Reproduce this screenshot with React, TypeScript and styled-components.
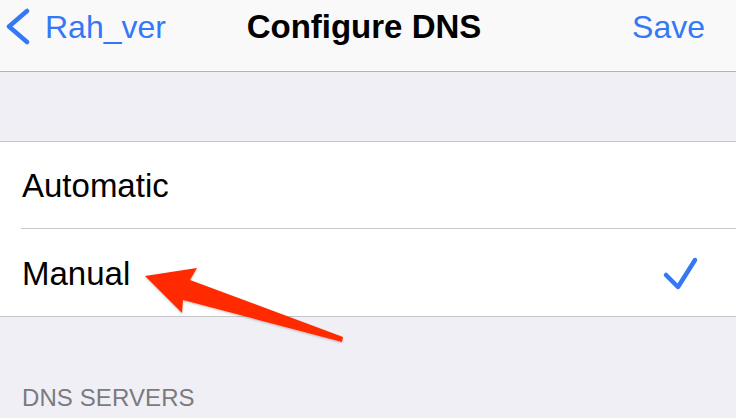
import React from "react";
import styled, { createGlobalStyle } from "styled-components";

const Global = createGlobalStyle`
  html, body { margin: 0; padding: 0; }
  body {
    background: #f0eff5;
    font-family: "Liberation Sans", Arial, Helvetica, sans-serif;
    -webkit-font-smoothing: antialiased;
  }
`;

const Page = styled.div`
  position: relative;
  width: 736px;
  height: 418px;
  overflow: hidden;
  background: #f0eff5;
`;

const NavBar = styled.header`
  height: 71px;
  box-sizing: border-box;
  padding-top: 11px;
  background: #f9f9fa;
  border-bottom: 1px solid #b3b3b6;
  display: grid;
  grid-template-columns: 1fr auto 1fr;
  align-items: start;
  height: 72px;
`;

const BackButton = styled.div`
  display: flex;
  align-items: center;
  height: 32px;
  padding-left: 5px;
  gap: 14px;
  color: #3478f6;
  font-size: 32px;
  line-height: 32px;
`;

const Title = styled.h1`
  margin: 0;
  font-size: 33px;
  line-height: 32px;
  font-weight: 700;
  color: #000;
  transform: translateX(-4px);
`;

const NavAction = styled.div`
  justify-self: end;
  padding-right: 31px;
  color: #3478f6;
  font-size: 32px;
  line-height: 32px;
`;

const Spacer = styled.div`
  height: 69px;
`;

const Group = styled.div`
  background: #fff;
  border-top: 1px solid #c6c6c9;
  border-bottom: 1px solid #c6c6c9;
`;

const Row = styled.div<{ $h: number; $divider?: boolean; $shift?: number }>`
  position: relative;
  height: ${(p) => p.$h}px;
  display: flex;
  align-items: center;
  justify-content: space-between;
  padding: ${(p) => (p.$shift ?? 0) * 2}px 37px 0 22px;
  box-sizing: border-box;
  font-size: 33px;
  color: #000;
  &::after {
    content: "";
    display: ${(p) => (p.$divider ? "block" : "none")};
    position: absolute;
    left: 21px;
    right: 0;
    bottom: 0;
    height: 1px;
    background: #c8c7cc;
  }
`;

const SectionHeader = styled.div`
  padding: 67px 0 0 22px;
  font-size: 24px;
  letter-spacing: 0.1px;
  color: #7a7a7f;
`;

const Overlay = styled.svg`
  position: absolute;
  left: 0;
  top: 0;
  pointer-events: none;
`;

export default function App() {
  return (
    <>
      <Global />
      <Page>
        <NavBar>
          <BackButton>
            <svg width="26" height="38" viewBox="0 0 26 38">
              <polyline
                points="22,3 4,18.5 22,34"
                fill="none"
                stroke="#3478f6"
                strokeWidth="4.5"
                strokeLinecap="round"
                strokeLinejoin="round"
              />
            </svg>
            <span>Rah_ver</span>
          </BackButton>
          <Title>Configure DNS</Title>
          <NavAction>Save</NavAction>
        </NavBar>
        <Spacer />
        <Group>
          <Row $h={87} $divider>
            <span>Automatic</span>
          </Row>
          <Row $h={87} $shift={1}>
            <span>Manual</span>
            <svg width="37" height="35" viewBox="0 0 37 35">
              <polyline
                points="4,19 16,31 33,4"
                fill="none"
                stroke="#3478f6"
                strokeWidth="4.5"
                strokeLinecap="round"
                strokeLinejoin="round"
              />
            </svg>
          </Row>
        </Group>
        <SectionHeader>DNS SERVERS</SectionHeader>
        <Overlay width="736" height="418" viewBox="0 0 736 418">
          <defs>
            <filter id="sh" x="-10%" y="-10%" width="120%" height="130%">
              <feDropShadow dx="0" dy="1" stdDeviation="1" floodColor="#000" floodOpacity="0.25" />
            </filter>
          </defs>
          <polygon
            points="145,276 197,268 190,280 343,337 342,342 183,300 182,313"
            fill="#ff2a00"
            filter="url(#sh)"
          />
        </Overlay>
      </Page>
    </>
  );
}
